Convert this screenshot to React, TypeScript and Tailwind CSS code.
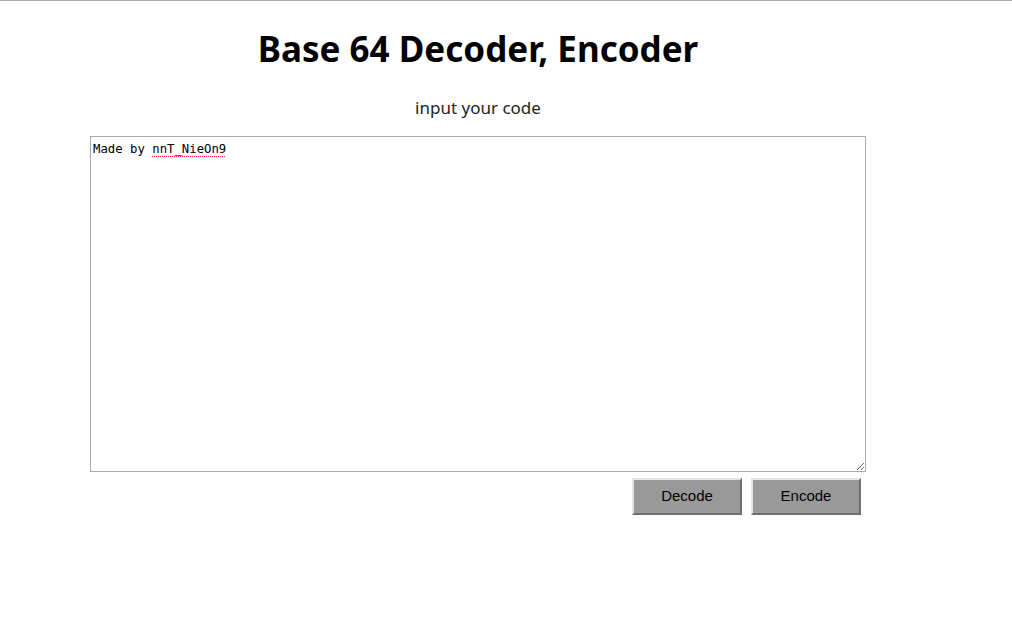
export default function App() {
  const btn =
    "h-[37px] w-[110px] border-2 border-t-[#e3e3e3] border-l-[#e3e3e3] border-r-[#6f6f6f] border-b-[#6f6f6f] bg-[#999999] text-[15px] text-black";
  return (
    <div className="min-h-[625px] border-t border-[#a9a9a9] bg-white" style={{ fontFamily: '"Noto Sans", "Noto Sans CJK KR", sans-serif' }}>
      <div className="ml-[90px] w-[776px] pt-[22px]">
        <h1 className="text-center text-[35px] font-bold leading-[52px] text-black">Base 64 Decoder, Encoder</h1>
        <p className="mt-[21px] text-center text-[17px] leading-[24px] text-[#222]">input your code</p>
        <div className="relative mt-[16px]">
          <textarea
            className="block h-[336px] w-[776px] resize border border-[#a9a9a9] outline-none"
            aria-label="input your code"
          />
          <div
            className="pointer-events-none absolute left-[3px] top-[5px] text-[12.3px] leading-[17px] text-black"
            style={{ fontFamily: '"DejaVu Sans Mono", monospace' }}
          >
            Made by <span className="underline decoration-dotted decoration-red-500 underline-offset-[3px]">nnT_NieOn9</span>
          </div>
        </div>
        <div className="mr-[5px] mt-[6px] flex justify-end gap-[9px]" style={{ fontFamily: '"Liberation Sans", Arial, sans-serif' }}>
          <button className={btn}>Decode</button>
          <button className={btn}>Encode</button>
        </div>
      </div>
    </div>
  );
}
